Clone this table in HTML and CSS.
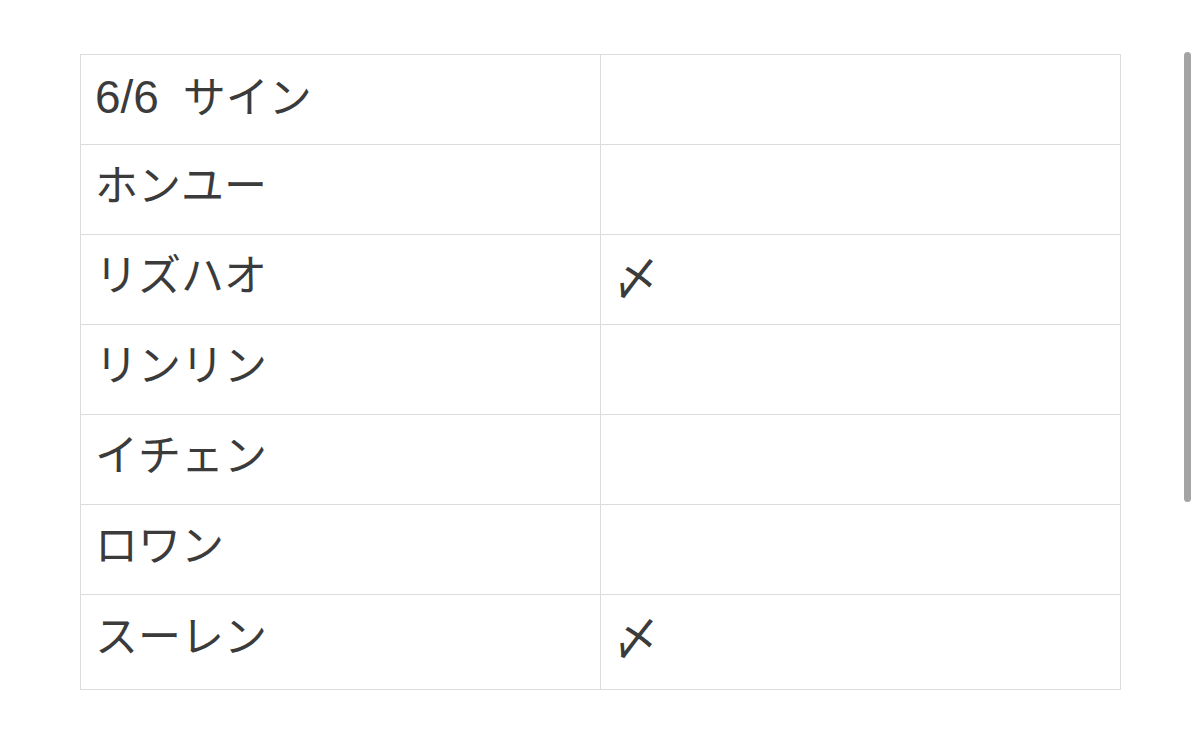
FILE: index.html
```html
<!DOCTYPE html>
<html lang="ja">
<head>
<meta charset="utf-8">
<link rel="stylesheet" href="styles.css">
</head>
<body>
<main class="page">
  <table class="sheet">
    <tbody>
      <tr><td><span class="num">6/6</span>&nbsp; サイン</td><td></td></tr>
      <tr><td>ホンユー</td><td></td></tr>
      <tr><td>リズハオ</td><td class="mark">〆</td></tr>
      <tr><td>リンリン</td><td></td></tr>
      <tr><td>イチェン</td><td></td></tr>
      <tr><td>ロワン</td><td></td></tr>
      <tr class="last"><td>スーレン</td><td class="mark">〆</td></tr>
    </tbody>
  </table>
</main>
<div class="scrollbar"></div>
</body>
</html>
```
FILE: styles.css
```css
html, body {
  margin: 0;
  padding: 0;
  background: #ffffff;
}
body {
  font-family: "Liberation Sans", "Noto Sans CJK JP", sans-serif;
  color: #3b3b3b;
  overflow: hidden;
}
.page {
  padding: 54px 80px 0 80px;
}
.sheet {
  width: 1041px;
  border-collapse: collapse;
  table-layout: fixed;
}
.sheet td {
  width: 50%;
  height: 90px;
  border: 1px solid #dcdcdc;
  padding: 0 0 6px 15px;
  font-size: 43px;
  line-height: 1;
  vertical-align: middle;
  box-sizing: border-box;
}
.sheet td:first-child {
  padding-left: 14px;
}
.sheet .num {
  font-size: 46px;
}
.sheet tr.last td {
  height: 95px;
  padding-bottom: 10px;
}
.sheet td.mark {
  padding-left: 12px;
  padding-bottom: 12px;
  font-family: "Noto Sans CJK JP", sans-serif;
  font-size: 46px;
}
.sheet tr.last td.mark {
  padding-bottom: 16px;
}
.scrollbar {
  position: fixed;
  top: 52px;
  left: 1184px;
  width: 7px;
  height: 450px;
  border-radius: 4px;
  background: #a4a4a4;
}
```
